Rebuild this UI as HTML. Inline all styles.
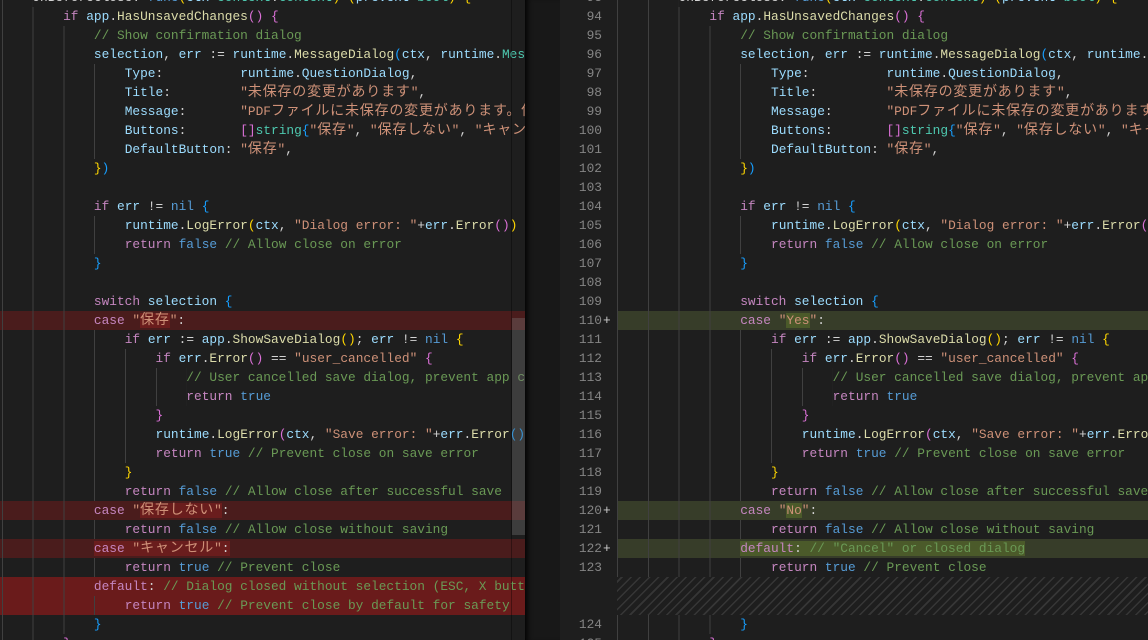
<!DOCTYPE html>
<html><head><meta charset="utf-8"><style>
html,body{margin:0;padding:0;width:1148px;height:640px;overflow:hidden;background:#1e1e1e}
body{position:relative;font-family:"Liberation Mono","Noto Sans CJK JP",monospace;font-size:12.833px;color:#d4d4d4}
.pane{position:absolute;top:0;height:640px;overflow:hidden}
.code{position:absolute;top:-12px}
.l{height:19px;line-height:19px;white-space:pre;box-sizing:border-box;padding-left:calc(var(--i,0)*7.7px);background-image:repeating-linear-gradient(to right,#404040 0 1px,transparent 1px 30.8px);background-size:calc(var(--i,0)*7.7px) 19px;background-repeat:no-repeat;width:1400px}
.j{font-size:14px;letter-spacing:0.8px}
.k{color:#c586c0}.b{color:#569cd6}.v{color:#9cdcfe}.f{color:#dcdcaa}.s{color:#ce9178}.c{color:#6a9955}.t{color:#4ec9b0}
.y{color:#ffd700}.m{color:#da70d6}.u{color:#179fff}
.dl{background-color:#4a1c1c}.dc{background:#6a1d1d}.db{background-color:#6a1b1b}
.al{background-color:#373d29}.ac{background:#4b5a2a}
.num{position:absolute;left:560px;width:42px;top:-12px;text-align:right;color:#858585}
.num div{height:19px;line-height:19px;position:relative}
.num .pl{position:absolute;left:43px;color:#cccccc}
</style></head><body>
<div class="pane" style="left:0;width:525px">
<div class="code" style="left:-29.3px">
<div class="l" style="--i:8">OnBeforeClose: <span class="b">func</span><span class="y">(</span><span class="v">ctx</span> <span class="t">context</span>.<span class="t">Context</span><span class="y">)</span> <span class="y">(</span><span class="v">prevent</span> <span class="t">bool</span><span class="y">)</span> <span class="y">{</span></div>
<div class="l" style="--i:12"><span class="k">if</span> <span class="v">app</span>.<span class="f">HasUnsavedChanges</span><span class="m">()</span> <span class="m">{</span></div>
<div class="l" style="--i:16"><span class="c">// Show confirmation dialog</span></div>
<div class="l" style="--i:16"><span class="v">selection</span>, <span class="v">err</span> := <span class="v">runtime</span>.<span class="f">MessageDialog</span><span class="u">(</span><span class="v">ctx</span>, <span class="v">runtime</span>.<span class="t">MessageDialogOptions</span><span class="y">{</span></div>
<div class="l" style="--i:20"><span class="v">Type</span>:          <span class="v">runtime</span>.<span class="v">QuestionDialog</span>,</div>
<div class="l" style="--i:20"><span class="v">Title</span>:         <span class="s">"<span class="j">未保存の変更があります</span>"</span>,</div>
<div class="l" style="--i:20"><span class="v">Message</span>:       <span class="s">"PDF<span class="j">ファイルに未保存の変更があります。保存しますか？</span>"</span>,</div>
<div class="l" style="--i:20"><span class="v">Buttons</span>:       <span class="m">[]</span><span class="t">string</span><span class="u">{</span><span class="s">"<span class="j">保存</span>"</span>, <span class="s">"<span class="j">保存しない</span>"</span>, <span class="s">"<span class="j">キャンセル</span>"</span><span class="u">}</span>,</div>
<div class="l" style="--i:20"><span class="v">DefaultButton</span>: <span class="s">"<span class="j">保存</span>"</span>,</div>
<div class="l" style="--i:16"><span class="y">}</span><span class="u">)</span></div>
<div class="l" style="--i:16"></div>
<div class="l" style="--i:16"><span class="k">if</span> <span class="v">err</span> != <span class="b">nil</span> <span class="u">{</span></div>
<div class="l" style="--i:20"><span class="v">runtime</span>.<span class="f">LogError</span><span class="y">(</span><span class="v">ctx</span>, <span class="s">"Dialog error: "</span>+<span class="v">err</span>.<span class="f">Error</span><span class="m">()</span><span class="y">)</span></div>
<div class="l" style="--i:20"><span class="k">return</span> <span class="b">false</span> <span class="c">// Allow close on error</span></div>
<div class="l" style="--i:16"><span class="u">}</span></div>
<div class="l" style="--i:16"></div>
<div class="l" style="--i:16"><span class="k">switch</span> <span class="v">selection</span> <span class="u">{</span></div>
<div class="l dl" style="--i:16"><span class="k">case</span> <span class="s">"<span class="dc"><span class="j">保存</span></span>"</span>:</div>
<div class="l" style="--i:20"><span class="k">if</span> <span class="v">err</span> := <span class="v">app</span>.<span class="f">ShowSaveDialog</span><span class="y">()</span>; <span class="v">err</span> != <span class="b">nil</span> <span class="y">{</span></div>
<div class="l" style="--i:24"><span class="k">if</span> <span class="v">err</span>.<span class="f">Error</span><span class="m">()</span> == <span class="s">"user_cancelled"</span> <span class="m">{</span></div>
<div class="l" style="--i:28"><span class="c">// User cancelled save dialog, prevent app closing</span></div>
<div class="l" style="--i:28"><span class="k">return</span> <span class="b">true</span></div>
<div class="l" style="--i:24"><span class="m">}</span></div>
<div class="l" style="--i:24"><span class="v">runtime</span>.<span class="f">LogError</span><span class="m">(</span><span class="v">ctx</span>, <span class="s">"Save error: "</span>+<span class="v">err</span>.<span class="f">Error</span><span class="u">()</span><span class="m">)</span></div>
<div class="l" style="--i:24"><span class="k">return</span> <span class="b">true</span> <span class="c">// Prevent close on save error</span></div>
<div class="l" style="--i:20"><span class="y">}</span></div>
<div class="l" style="--i:20"><span class="k">return</span> <span class="b">false</span> <span class="c">// Allow close after successful save</span></div>
<div class="l dl" style="--i:16"><span class="k">case</span> <span class="s">"<span class="dc"><span class="j">保存しない</span>"</span></span>:</div>
<div class="l" style="--i:20"><span class="k">return</span> <span class="b">false</span> <span class="c">// Allow close without saving</span></div>
<div class="l dl" style="--i:16"><span class="dc"><span class="k">case</span> <span class="s">"<span class="j">キャンセル</span>"</span>:</span></div>
<div class="l" style="--i:20"><span class="k">return</span> <span class="b">true</span> <span class="c">// Prevent close</span></div>
<div class="l db" style="--i:16"><span class="k">default</span>: <span class="c">// Dialog closed without selection (ESC, X button)</span></div>
<div class="l db" style="--i:20"><span class="k">return</span> <span class="b">true</span> <span class="c">// Prevent close by default for safety</span></div>
<div class="l" style="--i:16"><span class="u">}</span></div>
<div class="l" style="--i:12"><span class="m">}</span></div>
</div>
</div>
<div style="position:absolute;left:511px;top:0;width:1px;height:640px;background:rgba(0,0,0,0.35)"></div>
<div style="position:absolute;left:512px;top:318px;width:13px;height:217px;background:rgba(121,121,121,0.35)"></div>
<div style="position:absolute;left:525px;top:0;width:35px;height:640px;background:#181818;box-shadow:inset 6px 0 6px -4px #000"></div>
<div class="num">
<div>93</div><div>94</div><div>95</div><div>96</div><div>97</div><div>98</div><div>99</div><div>100</div><div>101</div><div>102</div><div>103</div><div>104</div><div>105</div><div>106</div><div>107</div><div>108</div><div>109</div><div>110<span class="pl">+</span></div><div>111</div><div>112</div><div>113</div><div>114</div><div>115</div><div>116</div><div>117</div><div>118</div><div>119</div><div>120<span class="pl">+</span></div><div>121</div><div>122<span class="pl">+</span></div><div>123</div><div></div><div></div><div>124</div><div>125</div>
</div>
<div class="pane" style="left:617px;width:531px">
<div class="code" style="left:0">
<div class="l" style="--i:8">OnBeforeClose: <span class="b">func</span><span class="y">(</span><span class="v">ctx</span> <span class="t">context</span>.<span class="t">Context</span><span class="y">)</span> <span class="y">(</span><span class="v">prevent</span> <span class="t">bool</span><span class="y">)</span> <span class="y">{</span></div>
<div class="l" style="--i:12"><span class="k">if</span> <span class="v">app</span>.<span class="f">HasUnsavedChanges</span><span class="m">()</span> <span class="m">{</span></div>
<div class="l" style="--i:16"><span class="c">// Show confirmation dialog</span></div>
<div class="l" style="--i:16"><span class="v">selection</span>, <span class="v">err</span> := <span class="v">runtime</span>.<span class="f">MessageDialog</span><span class="u">(</span><span class="v">ctx</span>, <span class="v">runtime</span>.<span class="t">MessageDialogOptions</span><span class="y">{</span></div>
<div class="l" style="--i:20"><span class="v">Type</span>:          <span class="v">runtime</span>.<span class="v">QuestionDialog</span>,</div>
<div class="l" style="--i:20"><span class="v">Title</span>:         <span class="s">"<span class="j">未保存の変更があります</span>"</span>,</div>
<div class="l" style="--i:20"><span class="v">Message</span>:       <span class="s">"PDF<span class="j">ファイルに未保存の変更があります。保存しますか？</span>"</span>,</div>
<div class="l" style="--i:20"><span class="v">Buttons</span>:       <span class="m">[]</span><span class="t">string</span><span class="u">{</span><span class="s">"<span class="j">保存</span>"</span>, <span class="s">"<span class="j">保存しない</span>"</span>, <span class="s">"<span class="j">キャンセル</span>"</span><span class="u">}</span>,</div>
<div class="l" style="--i:20"><span class="v">DefaultButton</span>: <span class="s">"<span class="j">保存</span>"</span>,</div>
<div class="l" style="--i:16"><span class="y">}</span><span class="u">)</span></div>
<div class="l" style="--i:16"></div>
<div class="l" style="--i:16"><span class="k">if</span> <span class="v">err</span> != <span class="b">nil</span> <span class="u">{</span></div>
<div class="l" style="--i:20"><span class="v">runtime</span>.<span class="f">LogError</span><span class="y">(</span><span class="v">ctx</span>, <span class="s">"Dialog error: "</span>+<span class="v">err</span>.<span class="f">Error</span><span class="m">()</span><span class="y">)</span></div>
<div class="l" style="--i:20"><span class="k">return</span> <span class="b">false</span> <span class="c">// Allow close on error</span></div>
<div class="l" style="--i:16"><span class="u">}</span></div>
<div class="l" style="--i:16"></div>
<div class="l" style="--i:16"><span class="k">switch</span> <span class="v">selection</span> <span class="u">{</span></div>
<div class="l al" style="--i:16"><span class="k">case</span> <span class="s">"<span class="ac">Yes</span>"</span>:</div>
<div class="l" style="--i:20"><span class="k">if</span> <span class="v">err</span> := <span class="v">app</span>.<span class="f">ShowSaveDialog</span><span class="y">()</span>; <span class="v">err</span> != <span class="b">nil</span> <span class="y">{</span></div>
<div class="l" style="--i:24"><span class="k">if</span> <span class="v">err</span>.<span class="f">Error</span><span class="m">()</span> == <span class="s">"user_cancelled"</span> <span class="m">{</span></div>
<div class="l" style="--i:28"><span class="c">// User cancelled save dialog, prevent app closing</span></div>
<div class="l" style="--i:28"><span class="k">return</span> <span class="b">true</span></div>
<div class="l" style="--i:24"><span class="m">}</span></div>
<div class="l" style="--i:24"><span class="v">runtime</span>.<span class="f">LogError</span><span class="m">(</span><span class="v">ctx</span>, <span class="s">"Save error: "</span>+<span class="v">err</span>.<span class="f">Error</span><span class="u">()</span><span class="m">)</span></div>
<div class="l" style="--i:24"><span class="k">return</span> <span class="b">true</span> <span class="c">// Prevent close on save error</span></div>
<div class="l" style="--i:20"><span class="y">}</span></div>
<div class="l" style="--i:20"><span class="k">return</span> <span class="b">false</span> <span class="c">// Allow close after successful save</span></div>
<div class="l al" style="--i:16"><span class="k">case</span> <span class="s">"<span class="ac">No</span>"</span>:</div>
<div class="l" style="--i:20"><span class="k">return</span> <span class="b">false</span> <span class="c">// Allow close without saving</span></div>
<div class="l al" style="--i:16"><span class="ac"><span class="k">default</span>: <span class="c">// "Cancel" or closed dialog</span></span></div>
<div class="l" style="--i:20"><span class="k">return</span> <span class="b">true</span> <span class="c">// Prevent close</span></div>
<div style="height:38px;background:repeating-linear-gradient(-45deg,#1e1e1e 0 5px,#363636 5px 6.5px)"></div>
<div class="l" style="--i:16"><span class="u">}</span></div>
<div class="l" style="--i:12"><span class="m">}</span></div>
</div>
</div>
</body></html>
